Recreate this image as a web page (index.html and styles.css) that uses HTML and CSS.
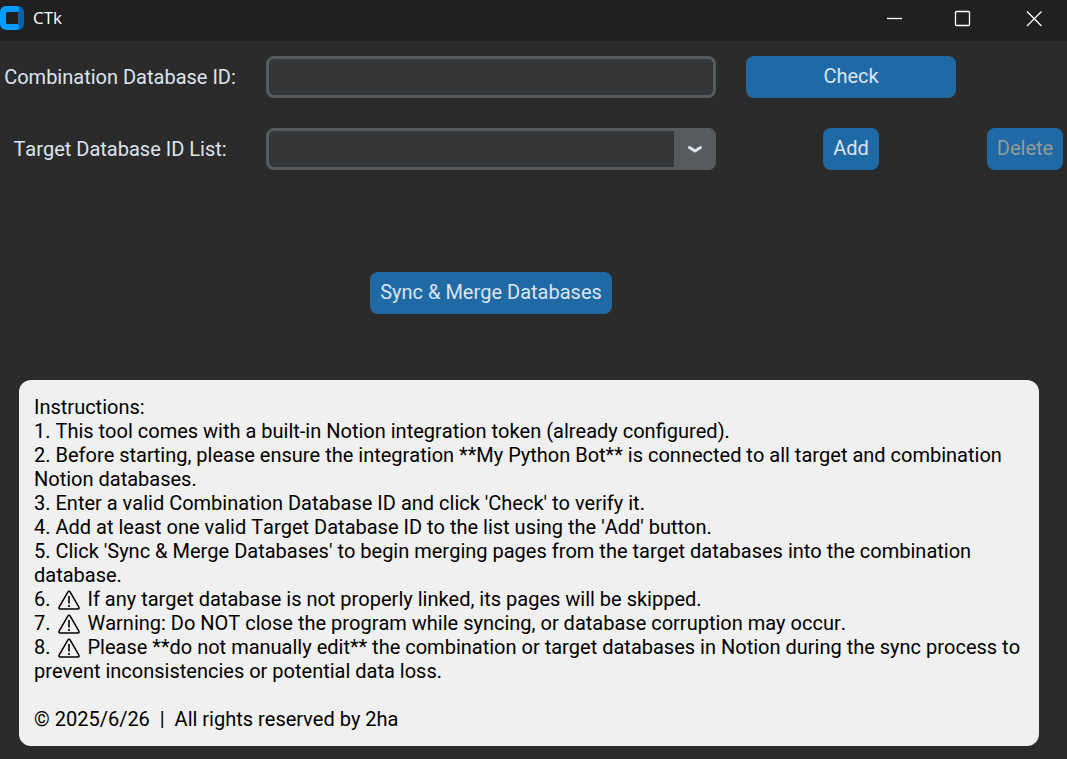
FILE: index.html
```html
<!DOCTYPE html>
<html lang="en">
<head>
<meta charset="utf-8">
<title>CTk</title>
<link rel="stylesheet" href="styles.css">
</head>
<body>
<svg class="defs" aria-hidden="true">
  <symbol id="warn" viewBox="0 0 22 20">
    <path d="M9.8 2.1 1.1 17.2Q.5 18.9 2.200 18.900H19.800Q21.500 18.900 20.900 17.200L12.200 2.100Q11 .5 9.800 2.100Z" fill="none" stroke="currentColor" stroke-width="1.500" stroke-linejoin="round"/>
    <path d="M11 6V13.600" stroke="currentColor" stroke-width="1.600"/>
    <circle cx="11" cy="16" r="1.100" fill="currentColor"/>
  </symbol>
</svg>
<header class="titlebar">
  <svg class="logo" viewBox="0 0 24 24" aria-hidden="true">
    <path d="M12 0h6a6 6 0 0 1 6 6v12a6 6 0 0 1-6 6h-6v-6h6V6h-6z" fill="#0463b0"/>
    <path d="M6 0H16.500A2.500 2.500 0 0 1 19 2.500V3.500A2.500 2.500 0 0 1 16.500 6H8A2 2 0 0 0 6 8V16A2 2 0 0 0 8 18H16.500A2.500 2.500 0 0 1 19 20.500V21.500A2.500 2.500 0 0 1 16.500 24H6A6 6 0 0 1 0 18V6A6 6 0 0 1 6 0Z" fill="#009cff"/>
    <rect x="6" y="6" width="12" height="12" rx="2" fill="#202020"/>
  </svg>
  <h1 class="title">CTk</h1>
  <div class="controls">
    <button class="control" type="button" aria-label="Minimize"><svg viewBox="0 0 16 16"><path d="M1 8.500H16"/></svg></button>
    <button class="control" type="button" aria-label="Maximize"><svg viewBox="0 0 16 16"><rect x="1.500" y="1.500" width="14" height="14" rx="1"/></svg></button>
    <button class="control" type="button" aria-label="Close"><svg viewBox="0 0 16 16"><path d="M1 1.500 15.500 16M15.500 1.500 1 16"/></svg></button>
  </div>
</header>
<main>
  <form class="form">
    <label class="label" for="combination">Combination Database ID:</label>
    <input class="field" id="combination" type="text">
    <button class="button button-wide" type="button">Check</button>
    <label class="label label-target" for="targets">Target Database ID List:</label>
    <div class="combo">
      <select class="field combo-field" id="targets"><option></option></select>
      <span class="combo-arrow"><svg viewBox="0 0 16 10" aria-hidden="true"><path d="M2.500 3.500 8 7 13.500 3.500"/></svg></span>
    </div>
    <button class="button" type="button">Add</button>
    <button class="button" type="button" disabled>Delete</button>
    <button class="button button-sync" type="button">Sync &amp; Merge Databases</button>
  </form>
  <section class="panel">
    <p>Instructions:</p>
    <p>1. This tool comes with a built-in Notion integration token (already configured).</p>
    <p>2. Before starting, please ensure the integration **My Python Bot** is connected to all target and combination Notion databases.</p>
    <p>3. Enter a valid Combination Database ID and click 'Check' to verify it.</p>
    <p>4. Add at least one valid Target Database ID to the list using the 'Add' button.</p>
    <p>5. Click 'Sync &amp; Merge Databases' to begin merging pages from the target databases into the combination database.</p>
    <p>6. <svg class="warn" role="img" aria-label="Warning"><use href="#warn"/></svg> If any target database is not properly linked, its pages will be skipped.</p>
    <p>7. <svg class="warn" role="img" aria-label="Warning"><use href="#warn"/></svg> Warning: Do NOT close the program while syncing, or database corruption may occur.</p>
    <p>8. <svg class="warn" role="img" aria-label="Warning"><use href="#warn"/></svg> Please **do not manually edit** the combination or target databases in Notion during the sync process to prevent inconsistencies or potential data loss.</p>
    <p class="copyright">© 2025/6/26&nbsp; |&nbsp; All rights reserved by 2ha</p>
  </section>
</main>
</body>
</html>
```
FILE: styles.css
```css
* {
  box-sizing: border-box;
}

body {
  margin: 0;
  min-height: 100vh;
  background: #2b2b2b;
  color: #dce4ee;
  font: 20px/24px Roboto, "Liberation Sans", sans-serif;
  font-kerning: none;
}

.defs {
  display: none;
}

.titlebar {
  display: flex;
  align-items: center;
  height: 41px;
  padding-bottom: 6px;
  background: #202020;
  color: #fff;
}

.logo {
  width: 24px;
  height: 24px;
}

.title {
  margin: 0 auto 0 9px;
  font: 17px/24px "Open Sans", "Noto Sans", sans-serif;
}

.controls {
  display: flex;
}

.control {
  display: flex;
  align-items: center;
  justify-content: center;
  width: 70px;
  height: 36px;
  padding: 0;
  border: 0;
  background: none;
  color: #fff;
}

.control:first-child {
  padding-left: 4px;
}

.control:last-child {
  padding-left: 4px;
}

.control svg {
  width: 16px;
  height: 16px;
  overflow: visible;
  fill: none;
  stroke: currentColor;
  stroke-width: 1.3;
}

.form {
  display: grid;
  grid-template-columns: 232px 1fr 210px 78px;
  grid-auto-rows: 42px;
  gap: 30px;
  padding: 15px 3px 0 4px;
}

.label {
  align-self: center;
  text-align: center;
  white-space: nowrap;
}

.label-target {
  grid-column: 1;
}

.field {
  width: 100%;
  height: 42px;
  padding: 0 10px;
  border: 3px solid #565b5e;
  border-radius: 8px;
  background: #343638;
  color: #dce4ee;
  font: inherit;
}

.combo {
  position: relative;
}

.combo-field {
  appearance: none;
}

.combo-arrow {
  position: absolute;
  inset: 0 0 0 auto;
  display: flex;
  align-items: center;
  justify-content: center;
  width: 42px;
  border-radius: 0 8px 8px 0;
  background: #565b5e;
  pointer-events: none;
}

.combo-arrow svg {
  width: 16px;
  height: 10px;
  fill: none;
  stroke: #dce4ee;
  stroke-width: 3;
  stroke-linecap: round;
  stroke-linejoin: round;
}

.button {
  justify-self: center;
  height: 42px;
  padding: 0 10px 2px;
  border: 0;
  border-radius: 8px;
  background: #1f6aa5;
  color: #dce4ee;
  font: inherit;
  font-kerning: none;
  white-space: nowrap;
}

.button:disabled {
  color: #999;
}

.button-wide {
  width: 100%;
}

.button-sync {
  grid-area: 4 / 2;
}

.panel {
  margin: 66px 28px 13px 19px;
  padding: 15px;
  border-radius: 12px;
  background: #f0f0f0;
  color: #000;
}

.panel p {
  margin: 0;
}

.panel .copyright {
  margin-top: 24px;
}

.warn {
  width: 22px;
  height: 20px;
  margin: 0 2px 0 3px;
  vertical-align: -4px;
}
```
